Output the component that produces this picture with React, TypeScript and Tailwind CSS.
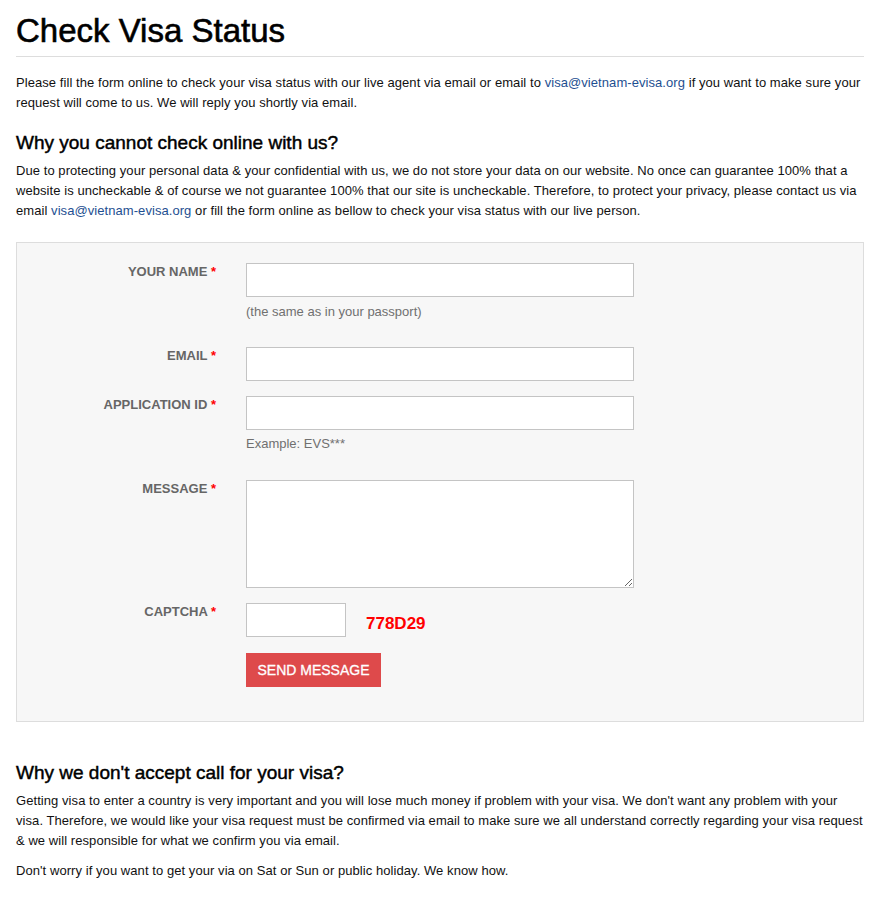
import React from "react";

const Req = () => <span className="text-[#ff0000]"> *</span>;

function Row({
  label,
  children,
  className = "",
}: {
  label: string;
  children: React.ReactNode;
  className?: string;
}) {
  return (
    <div className={"flex items-start " + className}>
      <label className="w-[199px] shrink-0 text-right text-[13px] leading-[18px] font-bold uppercase text-[#666]">
        {label}
        <Req />
      </label>
      <div className="ml-[30px] flex flex-col">{children}</div>
    </div>
  );
}

export default function App() {
  const link = "text-[#1e4f91]";
  const heading = "text-[19px] leading-[22px] font-normal text-black [-webkit-text-stroke:0.45px_black]";
  return (
    <div
      className="pl-[16px] pr-[9px] pb-[20px] text-[#111] text-[13px] leading-[20px]"
      style={{ fontFamily: '"Liberation Sans", Arial, Helvetica, sans-serif' }}
    >
      <h1 className="mt-[13px] pb-[7px] border-b border-[#dddddd] text-[33px] leading-[36px] font-normal text-black [-webkit-text-stroke:0.6px_black]">
        Check Visa Status
      </h1>
      <p className="mt-[16px] tracking-[0.065px]">
        Please fill the form online to check your visa status with our live agent via email or email to{" "}
        <a className={link}>visa@vietnam-evisa.org</a> if you want to make sure your request will come to us. We will
        reply you shortly via email.
      </p>
      <h3 className={"mt-[19px] " + heading}>Why you cannot check online with us?</h3>
      <p className="mt-[7px] tracking-[0.065px]">
        Due to protecting your personal data &amp; your confidential with us, we do not store your data on our website.
        No once can guarantee 100% that a website is uncheckable &amp; of course we not guarantee 100% that our site is
        uncheckable. Therefore, to protect your privacy, please contact us via email{" "}
        <a className={link}>visa@vietnam-evisa.org</a> or fill the form online as bellow to check your visa status with
        our live person.
      </p>

      <div className="mt-[21px] border border-[#dddddd] bg-[#f7f7f7] pt-[20px] pb-[34px]">
        <Row label="Your Name">
          <input className="w-[388px] h-[34px] border border-[#c4c4c4] bg-white" />
          <span className="mt-[5px] text-[13px] leading-[20px] text-[#707070]">(the same as in your passport)</span>
        </Row>
        <Row label="Email" className="mt-[25px]">
          <input className="w-[388px] h-[34px] border border-[#c4c4c4] bg-white" />
        </Row>
        <Row label="Application ID" className="mt-[15px]">
          <input className="w-[388px] h-[34px] border border-[#c4c4c4] bg-white" />
          <span className="mt-[4px] text-[13px] leading-[20px] text-[#707070]">Example: EVS***</span>
        </Row>
        <Row label="Message" className="mt-[26px]">
          <textarea className="w-[388px] h-[108px] border border-[#c4c4c4] bg-white block" />
        </Row>
        <Row label="Captcha" className="mt-[15px]">
          <div className="flex items-center">
            <input className="w-[100px] h-[34px] border border-[#c4c4c4] bg-white" />
            <span className="ml-[20px] mt-[8px] text-[17px] leading-[20px] font-bold text-[#ff0000]">778D29</span>
          </div>
          <button className="mt-[16px] w-[135px] h-[34px] bg-[#de4a4b] text-white text-[14px] uppercase [-webkit-text-stroke:0.3px_white]">
            Send Message
          </button>
        </Row>
      </div>

      <h3 className={"mt-[40px] " + heading}>Why we don't accept call for your visa?</h3>
      <p className="mt-[7px] tracking-[0.065px]">
        Getting visa to enter a country is very important and you will lose much money if problem with your visa. We
        don't want any problem with your visa. Therefore, we would like your visa request must be confirmed via email to
        make sure we all understand correctly regarding your visa request &amp; we will responsible for what we confirm
        you via email.
      </p>
      <p className="mt-[10px] tracking-[0.065px]">
        Don't worry if you want to get your via on Sat or Sun or public holiday. We know how.
      </p>
    </div>
  );
}
